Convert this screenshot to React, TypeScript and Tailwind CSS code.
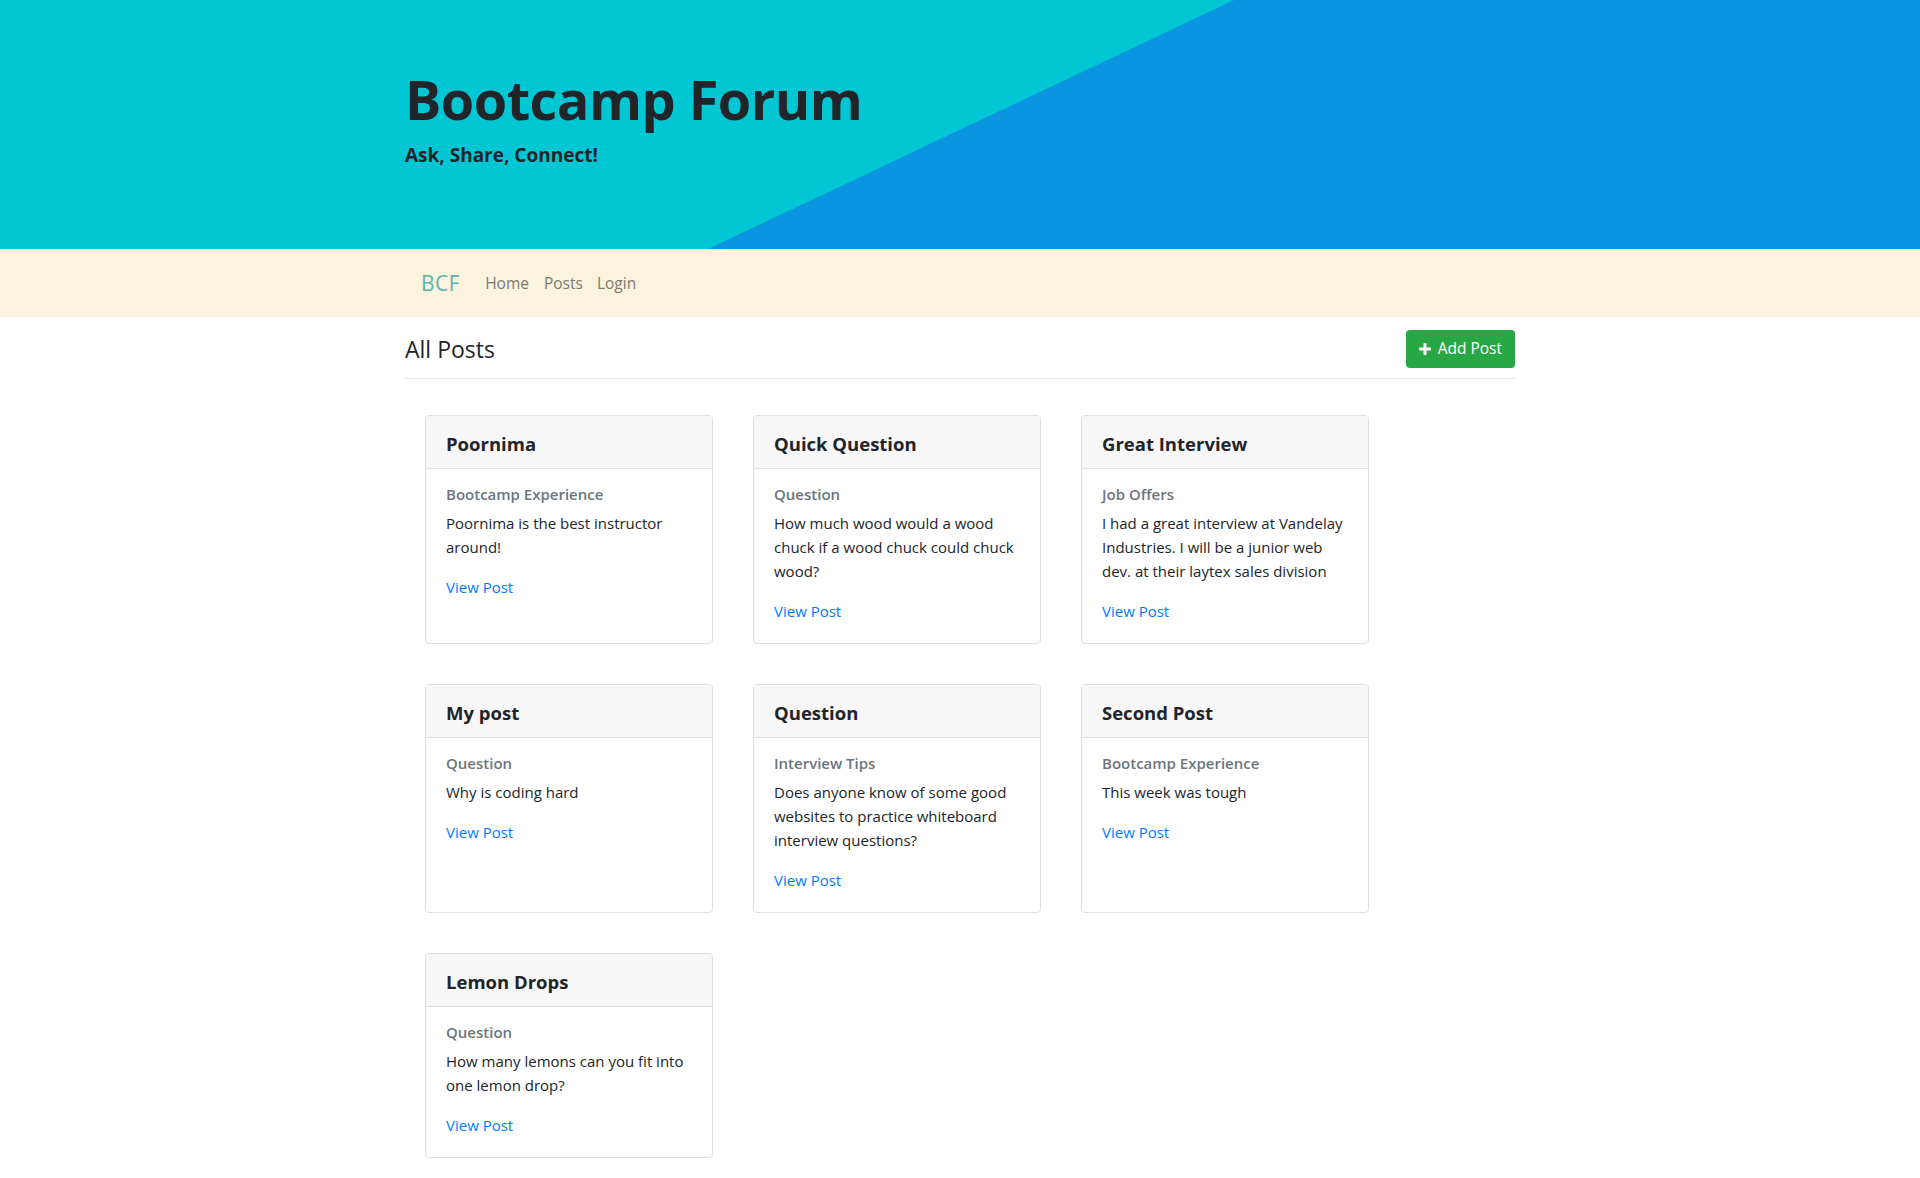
import React from 'react';

type Post = {
    title: string;
    category: string;
    body: string;
};

const posts: Post[] = [
    { title: 'Poornima', category: 'Bootcamp Experience', body: 'Poornima is the best instructor around!' },
    { title: 'Quick Question', category: 'Question', body: 'How much wood would a wood chuck if a wood chuck could chuck wood?' },
    { title: 'Great Interview', category: 'Job Offers', body: 'I had a great interview at Vandelay Industries. I will be a junior web dev. at their laytex sales division' },
    { title: 'My post', category: 'Question', body: 'Why is coding hard' },
    { title: 'Question', category: 'Interview Tips', body: 'Does anyone know of some good websites to practice whiteboard interview questions?' },
    { title: 'Second Post', category: 'Bootcamp Experience', body: 'This week was tough' },
    { title: 'Lemon Drops', category: 'Question', body: 'How many lemons can you fit into one lemon drop?' },
];

function PlusIcon() {
    return (
        <svg width="12" height="12" viewBox="0 0 12 12" className="shrink-0">
            <rect x="4.5" y="0" width="3" height="12" rx="0.8" fill="currentColor" />
            <rect x="0" y="4.5" width="12" height="3" rx="0.8" fill="currentColor" />
        </svg>
    );
}

function PostCard({ post }: { post: Post }) {
    return (
        <div className="flex flex-col bg-white border border-[#dfdfdf] rounded-[4px] overflow-hidden">
            <div className="bg-[#f7f7f7] border-b border-[#dfdfdf] px-5 pt-4 pb-3">
                <h5 className="text-[18.5px] leading-6 font-bold text-[#212529]">{post.title}</h5>
            </div>
            <div className="px-5 pt-5 pb-5">
                <h6 className="-mt-1 mb-[7px] text-[15px] leading-[19px] font-semibold text-[#6c757d]">{post.category}</h6>
                <p className="mb-4 text-[15px] leading-6 text-[#212529]">{post.body}</p>
                <a href="#" className="text-[15px] leading-6 text-[#007bff]">View Post</a>
            </div>
        </div>
    );
}

export default function App() {
    return (
        <div className="min-h-screen bg-white font-['Open_Sans','Noto_Sans',sans-serif] text-[#212529]">
            {/* jumbotron */}
            <header className="relative h-[249px] bg-[#00c7d3] overflow-hidden">
                <svg className="absolute inset-0 w-full h-full" viewBox="0 0 1920 249" preserveAspectRatio="none">
                    <polygon points="1234,0 1920,0 1920,249 708,249" fill="#0a95e0" />
                </svg>
                <div className="relative max-w-[1140px] mx-auto px-[15px] pt-[66px]">
                    <h1 className="text-[54px] leading-[67px] font-bold tracking-[-0.5px] text-[#212529]">Bootcamp Forum</h1>
                    <p className="mt-[7px] text-[19px] leading-[30px] font-bold text-[#212529]">Ask, Share, Connect!</p>
                </div>
            </header>

            <nav className="bg-[#faf3de] h-[68px]">
                <div className="max-w-[1140px] mx-auto px-[15px] h-full flex items-center pt-[2px]">
                    <div className="flex items-center pl-4">
                        <a href="#" className="text-[21px] tracking-[0.5px] text-[#5fb3ad] mr-[17px]">BCF</a>
                        <a href="#" className="px-2 text-[15.5px] text-[#7d7a6f]">Home</a>
                        <a href="#" className="px-[7px] text-[15.5px] text-[#7d7a6f]">Posts</a>
                        <a href="#" className="px-[7px] text-[15.5px] text-[#7d7a6f]">Login</a>
                    </div>
                </div>
            </nav>

            <main className="max-w-[1140px] mx-auto px-[15px] pt-[13px] pb-10">
                <div className="flex items-center justify-between">
                    <h4 className="text-[23px] leading-[29px] font-normal">All Posts</h4>
                    <button className="h-[38px] px-[13px] rounded-[4px] bg-[#28a745] text-white text-[15.5px] flex items-center gap-[7px]">
                        <PlusIcon />
                        Add Post
                    </button>
                </div>
                <hr className="mt-[10px] mb-4 border-t border-[#e5e5e5]" />

                <div className="grid grid-cols-[repeat(3,288px)] gap-10 px-5 pt-5">
                    {posts.map((post) => (
                        <PostCard key={post.title} post={post} />
                    ))}
                </div>
            </main>
        </div>
    );
}
